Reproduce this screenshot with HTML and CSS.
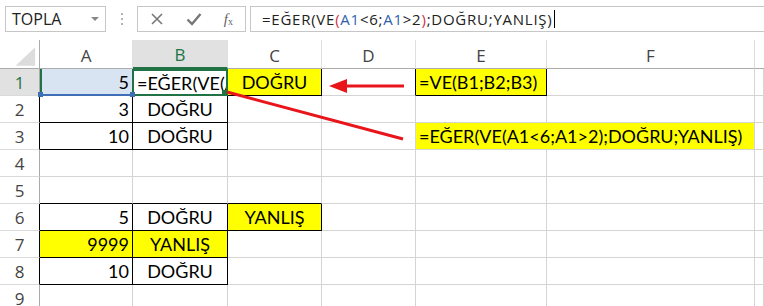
FILE: index.html
```html
<!DOCTYPE html>
<html>
<head>
<meta charset="utf-8">
<link rel="stylesheet" href="styles.css">
</head>
<body>
<div class="app">
  <div class="toolbar">
    <div class="namebox"><span>TOPLA</span><span class="caret"></span></div>
    <div class="dots"><i></i><i></i><i></i></div>
    <div class="fxbtns">
      <svg class="ico" width="14" height="14" viewBox="0 0 14 14"><path d="M2 2 L12 12 M12 2 L2 12" stroke="#777" stroke-width="1.6" fill="none"/></svg>
      <svg class="ico" width="16" height="14" viewBox="0 0 16 14"><path d="M1.5 7.5 L6 12 L14.5 2" stroke="#777" stroke-width="2.4" fill="none"/></svg>
      <span class="fx"><i>f</i><sub>x</sub></span>
    </div>
    <div class="formula">=EĞER(VE<span class="red">(</span><span class="blue">A1</span>&lt;6;<span class="blue">A1</span>&gt;2<span class="red">)</span>;DOĞRU;YANLIŞ)<span class="cursor"></span></div>
  </div>

  <div class="sheet">
    <div class="hd corner"><svg width="40" height="29" viewBox="0 0 40 29"><polygon points="36,7 36,26 16,26" fill="#dcdcdc"/></svg></div>
    <div class="hd">A</div>
    <div class="hd on">B</div>
    <div class="hd">C</div>
    <div class="hd">D</div>
    <div class="hd">E</div>
    <div class="hd">F</div>
    <div class="hd last"></div>

    <!-- row 1 -->
    <div class="rh on">1</div>
    <div class="c num a1">5<span class="hnd bl"></span><span class="hnd br"></span></div>
    <div class="c txt b1">=EĞER(VE(A1&lt;6;A1&gt;2);DOĞRU;YANLIŞ)<span class="fill"></span></div>
    <div class="c ctr y kr kb">DOĞRU</div>
    <div class="c kr"></div>
    <div class="c txt y kr kb">=VE(B1;B2;B3)</div>
    <div class="c"></div>
    <div class="c"></div>

    <!-- row 2 -->
    <div class="rh kl">2</div>
    <div class="c num kr kb">3</div>
    <div class="c ctr kr kb">DOĞRU</div>
    <div class="c"></div>
    <div class="c"></div>
    <div class="c"></div>
    <div class="c"></div>
    <div class="c"></div>

    <!-- row 3 -->
    <div class="rh kl">3</div>
    <div class="c num kr kb">10</div>
    <div class="c ctr kr kb">DOĞRU</div>
    <div class="c"></div>
    <div class="c"></div>
    <div class="c txt y span2">=EĞER(VE(A1&lt;6;A1&gt;2);DOĞRU;YANLIŞ)</div>
    <div class="c"></div>

    <!-- row 4 -->
    <div class="rh">4</div>
    <div class="c"></div>
    <div class="c"></div>
    <div class="c"></div>
    <div class="c"></div>
    <div class="c"></div>
    <div class="c"></div>
    <div class="c"></div>

    <!-- row 5 -->
    <div class="rh">5</div>
    <div class="c kb"></div>
    <div class="c kb"></div>
    <div class="c kb"></div>
    <div class="c"></div>
    <div class="c"></div>
    <div class="c"></div>
    <div class="c"></div>

    <!-- row 6 -->
    <div class="rh kl">6</div>
    <div class="c num kr kb">5</div>
    <div class="c ctr kr kb">DOĞRU</div>
    <div class="c ctr y kr kb">YANLIŞ</div>
    <div class="c"></div>
    <div class="c"></div>
    <div class="c"></div>
    <div class="c"></div>

    <!-- row 7 -->
    <div class="rh kl">7</div>
    <div class="c num y kr kb">9999</div>
    <div class="c ctr y kr kb">YANLIŞ</div>
    <div class="c"></div>
    <div class="c"></div>
    <div class="c"></div>
    <div class="c"></div>
    <div class="c"></div>

    <!-- row 8 -->
    <div class="rh kl">8</div>
    <div class="c num kr kb">10</div>
    <div class="c ctr kr kb">DOĞRU</div>
    <div class="c"></div>
    <div class="c"></div>
    <div class="c"></div>
    <div class="c"></div>
    <div class="c"></div>

    <!-- row 9 -->
    <div class="rh">9</div>
    <div class="c"></div>
    <div class="c"></div>
    <div class="c"></div>
    <div class="c"></div>
    <div class="c"></div>
    <div class="c"></div>
    <div class="c"></div>
  </div>

  <svg class="arrows" width="764" height="306" viewBox="0 0 764 306">
    <line x1="404" y1="86" x2="343" y2="86" stroke="#e8151b" stroke-width="3"/>
    <polygon points="329,86 347,79 347,93" fill="#e8151b"/>
    <line x1="403" y1="139" x2="227" y2="92" stroke="#e8151b" stroke-width="3"/>
  </svg>
</div>
</body>
</html>
```
FILE: styles.css
```css
* { box-sizing: border-box; }
body { margin: 0; background: #fff; }
.app { position: relative; width: 764px; height: 306px; overflow: hidden; }

.toolbar {
  display: flex;
  align-items: flex-start;
  height: 40px;
  padding: 6px 0 0 5px;
  font-family: "Open Sans", "DejaVu Sans", sans-serif;
}
.namebox {
  width: 101px; height: 26px;
  border: 1px solid #c6c6c6;
  display: flex; align-items: center; justify-content: space-between;
  padding: 0 6px 0 6px;
  font-size: 16px; color: #222;
}
.caret {
  width: 0; height: 0;
  border-left: 4px solid transparent; border-right: 4px solid transparent;
  border-top: 4px solid #888;
}
.dots {
  width: 31px; height: 26px;
  display: flex; flex-direction: column; align-items: center; justify-content: center; gap: 3px;
}
.dots i { display: block; width: 2px; height: 2px; background: #b4b4b4; }
.fxbtns {
  width: 109px; height: 26px;
  border: 1px solid #c6c6c6;
  display: flex; align-items: center; justify-content: space-between;
  padding: 0 12px 0 12px;
}
.fx { font-family: "Liberation Serif", serif; color: #666; font-size: 15px; }
.fx sub { font-size: 10px; vertical-align: -1px; }
.formula {
  margin-left: 4px;
  flex: 1;
  height: 26px;
  border: 1px solid #c6c6c6;
  border-right: none;
  padding-left: 11px;
  font-size: 15px; line-height: 24px; color: #222;
  letter-spacing: 0.75px;
  white-space: nowrap;
  display: flex; align-items: center;
}
.red { color: #d1333f; }
.blue { color: #2f5fae; }
.cursor { display: inline-block; width: 1px; height: 18px; background: #000; margin-left: 1px; }

.sheet {
  display: grid;
  grid-template-columns: 40px 93px 95px 94px 94px 131px 208px 1fr;
  grid-template-rows: 29px repeat(9, 27px);
  font-family: "Lato", "Open Sans", sans-serif;
  font-size: 18px;
  color: #000;
}
.hd {
  border-right: 1px solid #dedede;
  border-bottom: 1px solid #ababab;
  display: flex; align-items: center; justify-content: center;
  font-family: "Open Sans", "DejaVu Sans", sans-serif;
  font-size: 17px; color: #444;
  padding-top: 2px;
}
.hd.corner { padding: 0; border-right: 1px solid #ababab; }
.hd.corner svg { display: block; }
.hd.on { background: #e1e1e1; color: #217346; border-bottom: 2px solid #217346; }
.hd.last { border-right: none; }
.rh {
  border-right: 1px solid #ababab;
  border-bottom: 1px solid #dadada;
  display: flex; align-items: center; justify-content: center;
  font-family: "Open Sans", "DejaVu Sans", sans-serif;
  font-size: 17px; color: #444;
}
.rh.on { background: #e1e1e1; color: #217346; }
.rh.kl { border-right-color: #000; }

.c {
  border-right: 1px solid #d4d4d4;
  border-bottom: 1px solid #d4d4d4;
  display: flex; align-items: center;
  white-space: nowrap; overflow: hidden;
  position: relative;
}
.num { justify-content: flex-end; padding-right: 3px; }
.ctr { justify-content: center; }
.txt { justify-content: flex-start; padding-left: 3px; }
.y { background: #ffff00; }
.kr { border-right-color: #000; }
.kb { border-bottom-color: #000; }
.span2 { grid-column: span 2; border-right: 1px solid #d4d4d4; }

.a1 {
  background: #d9e4f3;
  border-bottom: 2px solid #3e6fb7;
  border-right-color: #217346;
  box-shadow: inset 2px 0 0 #217346;
  overflow: visible;
}
.b1 {
  overflow: hidden;
  border: 2px solid #217346;
  border-left: 1px solid #217346;
  padding-left: 3px;
}
.b1 .fill {
  position: absolute; right: -1px; bottom: -1px;
  width: 5px; height: 5px; background: #217346;
}
.hnd { position: absolute; width: 5px; height: 5px; background: #3e6fb7; bottom: -3px; z-index: 2; }
.hnd.bl { left: -2px; }
.hnd.br { right: -3px; }

.arrows { position: absolute; left: 0; top: 0; pointer-events: none; }
```
